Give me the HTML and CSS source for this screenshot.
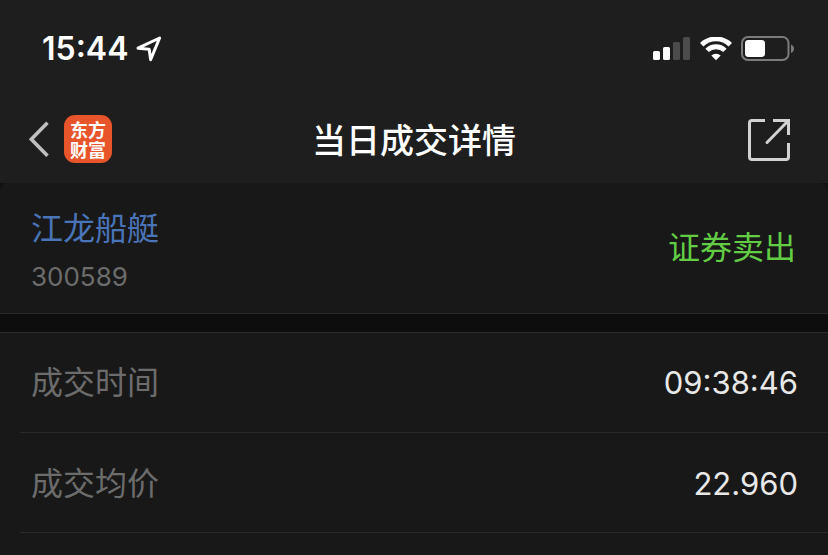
FILE: index.html
```html
<!DOCTYPE html>
<html lang="zh-CN">
<head>
<meta charset="utf-8">
<meta name="viewport" content="width=device-width, initial-scale=1">
<title>当日成交详情</title>
<link rel="stylesheet" href="styles.css">
</head>
<body>
<header class="top">
  <div class="status">
    <div class="status-left">
      <time class="clock">15:44</time>
      <svg class="location" width="26" height="26" viewBox="0 0 26 26" aria-hidden="true">
        <path d="M2 12.2 23.6 2 14.6 23.6 13.2 13.2Z" fill="none" stroke="#fff" stroke-width="3" stroke-linejoin="round"/>
      </svg>
    </div>
    <div class="status-right">
      <svg width="38" height="24" viewBox="0 0 38 24" aria-hidden="true">
        <rect x="0" y="14" width="7" height="9" rx="1.6" fill="#fff"/>
        <rect x="10" y="10" width="7" height="13" rx="1.6" fill="#fff"/>
        <rect x="20" y="5" width="7" height="18" rx="1.6" fill="#4c4c4c"/>
        <rect x="30" y="0" width="7" height="23" rx="1.6" fill="#4c4c4c"/>
      </svg>
      <svg width="32" height="24" viewBox="0 0 32 24" aria-hidden="true">
        <g fill="none" stroke="#fff" stroke-width="4.8">
          <path d="M1.7 7.700a20.4 20.4 0 0 1 28.6 0"/>
          <path d="M7.1 13.4a12.7 12.7 0 0 1 17.8 0"/>
        </g>
        <path d="M11.300 18.600a6.800 6.800 0 0 1 9.400 0L16 23.300Z" fill="#fff"/>
      </svg>
      <svg width="54" height="26" viewBox="0 0 54 26" aria-hidden="true">
        <rect x="1" y="1" width="46.5" height="23" rx="6" fill="none" stroke="#7c7c7c" stroke-width="2"/>
        <rect x="4" y="4" width="20" height="17" rx="3.4" fill="#fff"/>
        <path d="M50 8.500c4 1.400 4 7.100 0 8.500Z" fill="#7c7c7c"/>
      </svg>
    </div>
  </div>
  <nav class="nav">
    <div class="nav-side">
      <button class="icon-button" type="button" aria-label="返回">
        <svg width="22" height="36" viewBox="0 0 22 36" aria-hidden="true">
          <path d="M19.500 1.800 3.300 18.300 19.500 34.800" fill="none" stroke="#bfbfbf" stroke-width="3.600"/>
        </svg>
      </button>
      <a class="brand" href="#">东方财富</a>
    </div>
    <h1 class="title">当日成交详情</h1>
    <div class="nav-side nav-end">
      <button class="icon-button" type="button" aria-label="分享">
        <svg width="44" height="44" viewBox="0 0 44 44" aria-hidden="true">
          <g fill="none" stroke="#d2d2d2" stroke-width="3">
            <path d="M18 3.500H5Q2.500 3.500 2.500 6V40Q2.500 42.500 5 42.500H39Q41.500 42.500 41.500 40V26"/>
            <path d="M26 3.500H41.500V18"/>
            <path d="M41 4 20 25.500" stroke-linecap="round"/>
          </g>
        </svg>
      </button>
    </div>
  </nav>
</header>
<main>
  <div class="stock-wrap">
    <section class="stock">
      <div class="stock-id">
        <a class="stock-name" href="#">江龙船艇</a>
        <span class="stock-code">300589</span>
      </div>
      <strong class="side">证券卖出</strong>
    </section>
  </div>
  <dl class="details">
    <div class="row"><dt>成交时间</dt><dd>09:38:46</dd></div>
    <div class="row"><dt>成交均价</dt><dd>22.960</dd></div>
  </dl>
</main>
</body>
</html>
```

FILE: styles.css
```css
* {
  box-sizing: border-box;
}

body {
  margin: 0;
  min-height: 100vh;
  background: #181818;
  color: #e8e8e8;
  font-family: Inter, "Noto Sans CJK SC", sans-serif;
  font-size: 32px;
  font-weight: 400;
  line-height: 40px;
}

.top {
  background: #1e1e1e;
}

.status {
  display: flex;
  align-items: center;
  justify-content: space-between;
  height: 98px;
  padding: 0 33px 0 42px;
}

.status-left,
.status-right {
  display: flex;
  align-items: center;
  gap: 8px;
}

.status-right {
  gap: 9px;
}

.clock {
  color: #fff;
  font-weight: 600;
}

.nav {
  display: grid;
  grid-template-columns: 1fr auto 1fr;
  align-items: center;
  height: 85px;
  padding: 0 28px 4px;
}

.nav-side {
  display: flex;
  align-items: center;
  gap: 14px;
}

.nav-end {
  justify-content: flex-end;
  padding-right: 9px;
}

.icon-button {
  display: flex;
  padding: 0;
  border: 0;
  background: none;
}

.brand {
  width: 48px;
  height: 48px;
  padding: 4px 6px;
  border-radius: 11px;
  background: #e9552b;
  color: #fff;
  font-family: "Noto Sans CJK SC", sans-serif;
  font-size: 18px;
  font-weight: 700;
  line-height: 20px;
  text-decoration: none;
}

.title {
  margin: 0;
  padding-top: 4px;
  color: #fff;
  font-size: 34px;
  font-weight: 500;
}

.stock-wrap {
  background: #101010;
}

.stock {
  display: flex;
  align-items: center;
  justify-content: space-between;
  height: 131px;
  padding: 0 32px 0 31px;
  border-bottom: 1px solid #2b2b2b;
  border-radius: 8px 8px 0 0;
  background: #181818;
}

.stock-id {
  display: flex;
  flex-direction: column;
  gap: 10px;
  padding-top: 8px;
}

.stock-name {
  color: #4a74b8;
  text-decoration: none;
}

.stock-code {
  color: #6c6c6c;
  font-size: 26px;
  line-height: 36px;
}

.side {
  color: #63cc45;
  font-weight: 400;
}

.details {
  margin: 0;
  border-top: 18px solid #0d0d0d;
  box-shadow: inset 0 1px #2b2b2b;
  padding-left: 20px;
}

.row {
  display: flex;
  align-items: center;
  justify-content: space-between;
  height: 100px;
  padding: 2px 30px 0 11px;
  border-bottom: 1px solid #292929;
}

.row:first-child {
  height: 101px;
}

.row dt {
  color: #6c6c6c;
}

.row dd {
  margin: 0;
  font-size: 31px;
}
```
